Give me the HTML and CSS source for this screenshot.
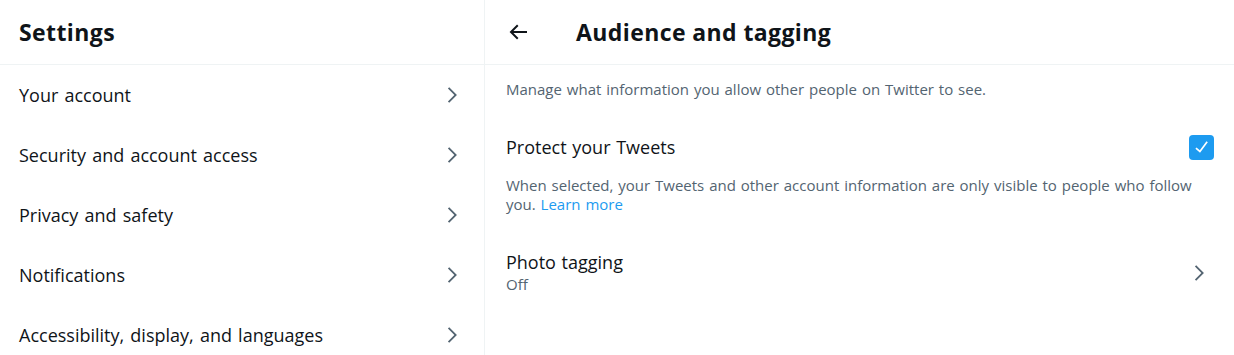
FILE: index.html
```html
<!DOCTYPE html>
<html lang="en">
<head>
    <meta charset="UTF-8">
    <meta name="viewport" content="width=device-width, initial-scale=1.0">
    <title>Settings / Twitter</title>
    <link rel="stylesheet" href="styles.css">
</head>
<body>
    <div class="layout">
        <section class="sidebar">
            <header class="header">
                <h2 class="title">Settings</h2>
            </header>
            <nav class="menu">
                <a class="menu-item" href="#">
                    <span>Your account</span>
                    <svg class="chevron" viewBox="0 0 24 24"><path d="M14.586 12L7.543 4.96l1.414-1.42L17.414 12l-8.457 8.46-1.414-1.42L14.586 12z"></path></svg>
                </a>
                <a class="menu-item" href="#">
                    <span>Security and account access</span>
                    <svg class="chevron" viewBox="0 0 24 24"><path d="M14.586 12L7.543 4.96l1.414-1.42L17.414 12l-8.457 8.46-1.414-1.42L14.586 12z"></path></svg>
                </a>
                <a class="menu-item" href="#">
                    <span>Privacy and safety</span>
                    <svg class="chevron" viewBox="0 0 24 24"><path d="M14.586 12L7.543 4.96l1.414-1.42L17.414 12l-8.457 8.46-1.414-1.42L14.586 12z"></path></svg>
                </a>
                <a class="menu-item" href="#">
                    <span>Notifications</span>
                    <svg class="chevron" viewBox="0 0 24 24"><path d="M14.586 12L7.543 4.96l1.414-1.42L17.414 12l-8.457 8.46-1.414-1.42L14.586 12z"></path></svg>
                </a>
                <a class="menu-item" href="#">
                    <span>Accessibility, display, and languages</span>
                    <svg class="chevron" viewBox="0 0 24 24"><path d="M14.586 12L7.543 4.96l1.414-1.42L17.414 12l-8.457 8.46-1.414-1.42L14.586 12z"></path></svg>
                </a>
            </nav>
        </section>

        <main class="detail">
            <header class="header detail-header">
                <button class="back-btn" aria-label="Back">
                    <svg viewBox="0 0 24 24"><path d="M7.414 13l5.043 5.04-1.414 1.42L3.586 12l7.457-7.46 1.414 1.42L7.414 11H21v2H7.414z"></path></svg>
                </button>
                <h2 class="title">Audience and tagging</h2>
            </header>

            <p class="intro">Manage what information you allow other people on Twitter to see.</p>

            <div class="option">
                <div class="option-row">
                    <span class="option-label">Protect your Tweets</span>
                    <span class="checkbox">
                        <svg viewBox="0 0 24 24"><path d="M9.64 18.952l-5.55-4.861 1.317-1.504 3.951 3.459 8.005-10.948L19 6.279l-9.36 12.673z"></path></svg>
                    </span>
                </div>
                <p class="option-note">When selected, your Tweets and other account information are only visible to people who follow you. <a href="#">Learn more</a></p>
            </div>

            <a class="link-row" href="#">
                <div>
                    <div class="option-label">Photo tagging</div>
                    <div class="option-value">Off</div>
                </div>
                <svg class="chevron" viewBox="0 0 24 24"><path d="M14.586 12L7.543 4.96l1.414-1.42L17.414 12l-8.457 8.46-1.414-1.42L14.586 12z"></path></svg>
            </a>
        </main>
    </div>
</body>
</html>
```

FILE: styles.css
```css
body {
    margin: 0;
    background: #fff;
    color: #0f1419;
    font-family: 'Open Sans', sans-serif;
    overflow: hidden;
}

a {
    color: inherit;
    text-decoration: none;
}

.layout {
    display: flex;
    height: 355px;
}

.sidebar {
    width: 484px;
    border-right: 1px solid #eff3f4;
    flex-shrink: 0;
}

.detail {
    flex: 1;
}

.header {
    height: 64px;
    border-bottom: 1px solid #eff3f4;
    display: flex;
    align-items: center;
    padding: 0 19px;
}

.title {
    margin: 0;
    font-size: 23px;
    font-weight: 700;
    letter-spacing: 0.4px;
}

.menu-item {
    display: flex;
    align-items: center;
    justify-content: space-between;
    height: 60px;
    padding: 0 21px 0 19px;
    font-size: 18px;
    word-spacing: 1.5px;
}

.chevron {
    width: 22px;
    height: 22px;
    fill: #536471;
}

.detail-header {
    padding-left: 21px;
}

.back-btn {
    border: none;
    background: none;
    padding: 0;
    margin-right: 46px;
    width: 24px;
    height: 24px;
    cursor: pointer;
}

.back-btn svg {
    width: 24px;
    height: 24px;
    fill: #0f1419;
}

.intro {
    margin: 0;
    padding: 14px 21px;
    font-size: 15px;
    line-height: 20px;
    word-spacing: 1px;
    color: #536471;
}

.option {
    padding: 22px 20px 0 21px;
}

.option-row {
    display: flex;
    align-items: center;
    justify-content: space-between;
    height: 24px;
}

.option-label {
    font-size: 18px;
    line-height: 22px;
    word-spacing: 1px;
}

.checkbox {
    width: 25px;
    height: 25px;
    border-radius: 4px;
    background: #1d9bf0;
    display: flex;
    align-items: center;
    justify-content: center;
}

.checkbox svg {
    width: 20px;
    height: 20px;
    fill: #fff;
}

.option-note {
    margin: 17px 0 0;
    font-size: 15px;
    line-height: 19px;
    word-spacing: 1px;
    color: #536471;
}

.option-note a {
    color: #1d9bf0;
}

.link-row {
    display: flex;
    align-items: center;
    justify-content: space-between;
    padding: 37px 24px 0 21px;
}

.option-value {
    font-size: 15px;
    line-height: 22px;
    color: #536471;
}
```
